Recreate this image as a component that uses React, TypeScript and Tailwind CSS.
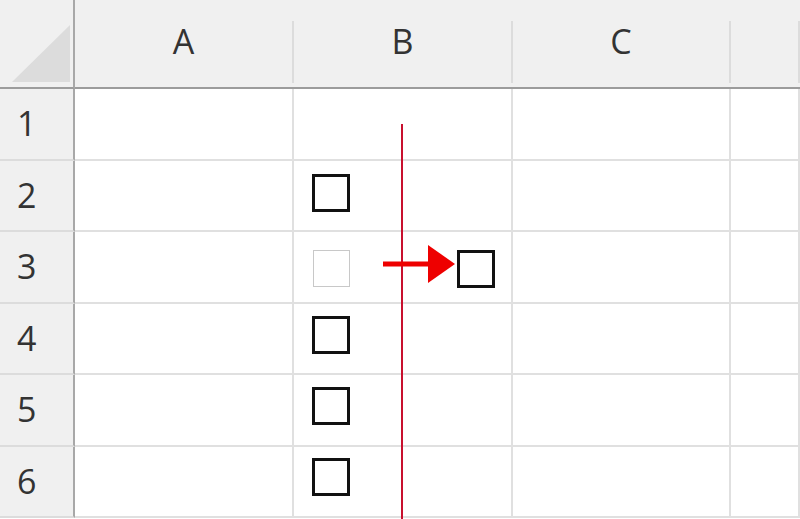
import React from 'react';

const cols = ['A', 'B', 'C', ''];
const rows = [1, 2, 3, 4, 5, 6];

// floating checkbox shapes (top / left in sheet pixels)
const boxes = [
  { top: 174, left: 312, faded: false },
  { top: 250, left: 313, faded: true },
  { top: 250, left: 457, faded: false },
  { top: 316, left: 312, faded: false },
  { top: 387, left: 312, faded: false },
  { top: 458, left: 312, faded: false },
];

export default function App() {
  return (
    <div className="relative w-[800px] h-[519px] overflow-hidden bg-white text-[#333]" style={{ fontFamily: '"Open Sans", "Noto Sans", sans-serif' }}>
      <div className="grid grid-cols-[75px_219px_219px_218px_1fr] grid-rows-[89px_repeat(6,71.5px)]">
        {/* Corner */}
        <div className="relative bg-[#f0f0f0] border-r-2 border-b-2 border-r-[#a8a8a8] border-b-[#9c9c9c]">
          <svg className="absolute left-[12px] top-[25px]" width="60" height="58" viewBox="0 0 60 58">
            <polygon points="0,57 58,57 58,0" fill="#dcdcdc" />
          </svg>
        </div>
        {/* Column headers */}
        {cols.map((c, i) => (
          <div
            key={i}
            className="flex items-center justify-center bg-[#f0f0f0] border-b-2 border-b-[#9c9c9c] text-[34px] pb-[4px]"
          >
            <div className="flex-1 text-center">{c}</div>
            <div className="self-end w-[2px] h-[62px] bg-[#dcdcdc]" />
          </div>
        ))}
        {/* Body */}
        {rows.map((r) => (
          <React.Fragment key={r}>
            <div className="flex items-center pl-[17px] bg-[#f0f0f0] border-r-2 border-r-[#a8a8a8] border-b-2 border-b-[#dcdcdc] text-[34px]">
              {r}
            </div>
            {cols.map((_, i) => (
              <div key={i} className="border-r-2 border-b-2 border-[#e0e0e0]" />
            ))}
          </React.Fragment>
        ))}
      </div>

      {/* Red guide line */}
      <div className="absolute left-[401px] top-[124px] w-[2px] h-[400px] bg-[#c8102e]" />

      {/* Check boxes */}
      {boxes.map((b, i) => (
        <div
          key={i}
          className={
            b.faded
              ? 'absolute w-[37px] h-[37px] border border-[#c8c8c8] bg-white'
              : 'absolute w-[38px] h-[38px] border-[3px] border-[#111] bg-white'
          }
          style={{ top: b.top, left: b.left }}
        />
      ))}

      {/* Arrow */}
      <svg className="absolute left-[380px] top-[243px]" width="80" height="42" viewBox="0 0 80 42">
        <path d="M3 18.5 H50 V23.5 H3 Z" fill="#ee0000" />
        <polygon points="48,2 75,21 48,40" fill="#ee0000" />
      </svg>
    </div>
  );
}
